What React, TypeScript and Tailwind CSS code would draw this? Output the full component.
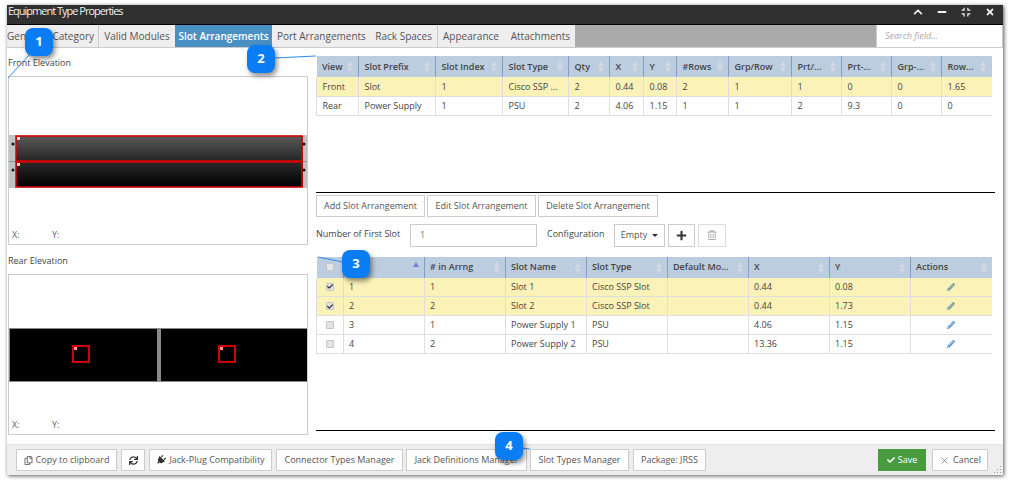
import {
  FaCheck,
  FaChevronUp,
  FaCompress,
  FaMinus,
  FaPencilAlt,
  FaPlug,
  FaPlus,
  FaRegCopy,
  FaRegTrashAlt,
  FaSync,
  FaTimes,
} from "react-icons/fa";
import { X } from "lucide-react";

const SortIcon = ({ active }: { active?: boolean }) => (
  <span className="flex flex-col items-center gap-px shrink-0">
    <span className={`w-0 h-0 border-x-[3.5px] border-x-transparent border-b-[5px] ${active ? "border-b-[#7c7fd0]" : "border-b-[#d3d9e2]"}`} />
    <span className={`w-0 h-0 border-x-[3.5px] border-x-transparent border-t-[5px] ${active ? "border-t-transparent" : "border-t-[#d3d9e2]"}`} />
  </span>
);

const Checkbox = ({ checked }: { checked?: boolean }) => (
  <span className="w-[8px] h-[8px] mx-auto flex items-center justify-center bg-[#e4e4e4] border border-[#c4c4c4] rounded-[1px]">
    {checked && <FaCheck className="text-[#333] text-[7px]" />}
  </span>
);

const Btn = ({ className, children }: { className: string; children: React.ReactNode }) => (
  <button className={`h-[22px] flex items-center justify-center gap-[3px] bg-white border border-[#ccc] text-[9px] text-[#555] whitespace-nowrap ${className}`}>
    {children}
  </button>
);

const Head = ({ label, active }: { label: string; active?: boolean }) => (
  <span className="flex items-center justify-between">
    <span>{label}</span>
    <SortIcon active={active} />
  </span>
);

const slotCols = [
  { label: "View", w: "w-[42px]" },
  { label: "Slot Prefix", w: "w-[77px]" },
  { label: "Slot Index", w: "w-[67px]" },
  { label: "Slot Type", w: "w-[66px]" },
  { label: "Qty", w: "w-[41px]" },
  { label: "X", w: "w-[34px]" },
  { label: "Y", w: "w-[33px]" },
  { label: "#Rows", w: "w-[52px]" },
  { label: "Grp/Row", w: "w-[63px]" },
  { label: "Prt/...", w: "w-[50px]" },
  { label: "Prt-...", w: "w-[50px]" },
  { label: "Grp-...", w: "w-[50px]" },
  { label: "Row...", w: "w-[50px]" },
];

const slotRows = [
  { sel: true, cells: ["Front", "Slot", "1", "Cisco SSP ...", "2", "0.44", "0.08", "2", "1", "1", "0", "0", "1.65"] },
  { sel: false, cells: ["Rear", "Power Supply", "1", "PSU", "2", "4.06", "1.15", "1", "1", "2", "9.3", "0", "0"] },
];

const moduleCols = [
  { label: "#", w: "w-[81px]", active: true },
  { label: "# in Arrng", w: "w-[81px]" },
  { label: "Slot Name", w: "w-[81px]" },
  { label: "Slot Type", w: "w-[81px]" },
  { label: "Default Mo...", w: "w-[81px]" },
  { label: "X", w: "w-[81px]" },
  { label: "Y", w: "w-[81px]" },
  { label: "Actions", w: "w-[81px]" },
];

const moduleRows = [
  { sel: true, cells: ["1", "1", "Slot 1", "Cisco SSP Slot", "", "0.44", "0.08"] },
  { sel: true, cells: ["2", "2", "Slot 2", "Cisco SSP Slot", "", "0.44", "1.73"] },
  { sel: false, cells: ["3", "1", "Power Supply 1", "PSU", "", "4.06", "1.15"] },
  { sel: false, cells: ["4", "2", "Power Supply 2", "PSU", "", "13.36", "1.15"] },
];

const thClass = "h-[21px] text-left font-semibold text-[#444] border-l border-[#7f9fc4] first:border-l-0 overflow-hidden whitespace-nowrap";
const tdClass = "h-[19px] border-l border-b border-[#dedede] overflow-hidden whitespace-nowrap";

const Callout = ({ n, className }: { n: number; className: string }) => (
  <div className={`absolute w-[28px] h-[28px] rounded-[8px] bg-[#0a7df5] text-white text-[13px] font-bold flex items-center justify-center shadow-[2px_3px_5px_rgba(0,0,0,0.45)] ${className}`}>
    {n}
  </div>
);

export default function App() {
  return (
    <div className="relative w-[1012px] h-[484px] overflow-hidden bg-white font-['Open_Sans',sans-serif] text-[9px] text-[#444]">
      <div className="ml-[7px] mt-[5px] w-[996px] h-[470px] flex flex-col bg-white shadow-[1px_1px_4px_rgba(0,0,0,0.65)]">
        {/* Title bar */}
        <div className="h-[20px] shrink-0 flex items-center justify-between bg-[#303030] border-b border-black text-white">
          <span className="text-[11px] tracking-[-1px] pl-px -mt-[7px] text-[#eee]">Equipment Type Properties</span>
          <div className="flex items-center gap-[14px] pr-[8px] -mt-[5px] text-[10px] text-[#f2f2f2]">
            <FaChevronUp />
            <FaMinus />
            <FaCompress />
            <FaTimes />
          </div>
        </div>

        {/* Tabs */}
        <div className="h-[23px] shrink-0 flex bg-[#aaa] border-b border-[#ccc] text-[10px] text-[#555]">
          <div className="w-[92px] flex items-center justify-between pr-[4px] bg-[#eee] border-r border-[#ccc] whitespace-nowrap">
            <span>General</span>
            <span>Category</span>
          </div>
          <div className="w-[76px] flex items-center justify-center bg-[#eee] whitespace-nowrap">Valid Modules</div>
          <div className="w-[97px] flex items-center justify-center bg-[#4a90c2] text-white font-semibold whitespace-nowrap">Slot Arrangements</div>
          <div className="w-[166px] flex items-center justify-between px-[5px] bg-[#eee] border-r border-[#ccc] whitespace-nowrap">
            <span>Port Arrangements</span>
            <span>Rack Spaces</span>
          </div>
          <div className="w-[137px] flex items-center justify-between px-[5px] bg-[#eee] whitespace-nowrap">
            <span>Appearance</span>
            <span>Attachments</span>
          </div>
          <div className="ml-auto w-[127px] flex items-center pl-[8px] bg-white border-x border-[#ccc] italic text-[9px] text-[#aaa]">Search field...</div>
        </div>

        {/* Body */}
        <div className="flex-1 min-h-0 flex">
          <div className="w-[300px] ml-px shrink-0 flex flex-col">
            <div className="mt-[8px] h-[14px] leading-[14px] text-[#444]">Front Elevation</div>
            <div className="mt-[6px] h-[169px] flex flex-col border border-[#ccc]">
              <svg className="mt-[58px] block" width="298" height="53" viewBox="0 0 298 53">
                <defs>
                  <linearGradient id="slotA" x1="0" y1="0" x2="0" y2="1">
                    <stop offset="0" stopColor="#5a5a5a" />
                    <stop offset="1" stopColor="#222" />
                  </linearGradient>
                  <linearGradient id="slotB" x1="0" y1="0" x2="0" y2="1">
                    <stop offset="0" stopColor="#2a2a2a" />
                    <stop offset="1" stopColor="#000" />
                  </linearGradient>
                </defs>
                <rect x="0" y="0" width="298" height="53" fill="#c2c2c2" />
                <rect x="0" y="26" width="298" height="1" fill="#8f8f8f" />
                <rect x="7" y="1" width="287" height="26" fill="url(#slotA)" />
                <rect x="7" y="27" width="287" height="25" fill="url(#slotB)" />
                <rect x="7" y="1" width="286" height="25" fill="none" stroke="#e00000" strokeWidth="1.5" />
                <rect x="7" y="27" width="286" height="25" fill="none" stroke="#e00000" strokeWidth="1.5" />
                <circle cx="4" cy="9" r="1.5" fill="#111" />
                <circle cx="4" cy="35" r="1.5" fill="#111" />
                <circle cx="295" cy="9" r="1.5" fill="#111" />
                <circle cx="295" cy="35" r="1.5" fill="#111" />
                <rect x="8" y="2" width="3" height="3" fill="#ffd0d0" />
                <rect x="8" y="28" width="3" height="3" fill="#ffd0d0" />
              </svg>
              <div className="mt-auto mb-[2px] h-[14px] pl-[3px] flex text-[#666]">
                <span className="w-[40px]">X:</span>
                <span>Y:</span>
              </div>
            </div>
            <div className="mt-[9px] h-[14px] leading-[14px] text-[#444]">Rear Elevation</div>
            <div className="mt-[6px] h-[161px] flex flex-col border border-[#ccc]">
              <svg className="mt-[53px] block" width="298" height="54" viewBox="0 0 298 54">
                <rect x="0" y="0" width="298" height="54" fill="#8a8a8a" />
                <rect x="1" y="1" width="147" height="52" fill="#000" />
                <rect x="152" y="1" width="146" height="52" fill="#000" />
                <rect x="64" y="18" width="16" height="16" fill="none" stroke="#d00000" strokeWidth="2" />
                <rect x="210" y="18" width="16" height="16" fill="none" stroke="#d00000" strokeWidth="2" />
                <rect x="65" y="19" width="3" height="3" fill="#ff9aa0" />
                <rect x="211" y="19" width="3" height="3" fill="#ff9aa0" />
              </svg>
              <div className="mt-auto mb-[2px] h-[14px] pl-[3px] flex text-[#666]">
                <span className="w-[40px]">X:</span>
                <span>Y:</span>
              </div>
            </div>
          </div>

          <div className="w-[679px] ml-[8px] shrink-0 flex flex-col">
            <table className="mt-[8px] w-[675px] table-fixed border-collapse">
              <thead>
                <tr className="bg-[#bccddf]">
                  {slotCols.map((c) => (
                    <th key={c.label} className={`${thClass} px-[5.5px] ${c.w}`}>
                      <Head label={c.label} />
                    </th>
                  ))}
                </tr>
              </thead>
              <tbody>
                {slotRows.map((r) => (
                  <tr key={r.cells[0]} className={r.sel ? "bg-[#fbf2b7]" : "bg-white"}>
                    {r.cells.map((v, i) => (
                      <td key={i} className={`${tdClass} px-[5.5px]`}>{v}</td>
                    ))}
                  </tr>
                ))}
              </tbody>
            </table>

            <div className="mt-[76px] h-px bg-black shrink-0" />
            <div className="mt-[2px] flex gap-[2px]">
              <Btn className="w-[109px]">Add Slot Arrangement</Btn>
              <Btn className="w-[109px]">Edit Slot Arrangement</Btn>
              <Btn className="w-[120px]">Delete Slot Arrangement</Btn>
            </div>
            <div className="mt-[7px] h-[23px] flex items-center">
              <span className="w-[94px] -mt-[3px] whitespace-nowrap">Number of First Slot</span>
              <div className="w-[127px] h-[23px] flex items-center pl-[9px] border border-[#ccc] text-[#777]">1</div>
              <span className="ml-[10px] w-[67px] -mt-[3px] whitespace-nowrap">Configuration</span>
              <div className="w-[51px] h-[23px] flex items-center justify-center gap-[5px] border border-[#ccc] text-[#555]">
                Empty
                <span className="w-0 h-0 border-x-[3px] border-x-transparent border-t-[3px] border-t-[#333]" />
              </div>
              <div className="ml-[3px] w-[27px] h-[23px] flex items-center justify-center border border-[#ccc] text-[#333] text-[11px]">
                <FaPlus />
              </div>
              <div className="ml-[3px] w-[28px] h-[23px] flex items-center justify-center border border-[#ddd] text-[#aaa] text-[10px]">
                <FaRegTrashAlt />
              </div>
            </div>

            <table className="mt-[10px] w-[675px] table-fixed border-collapse">
              <thead>
                <tr className="bg-[#bccddf]">
                  <th className={`${thClass} px-[5px] w-[27px]`}>
                    <Checkbox />
                  </th>
                  {moduleCols.map((c) => (
                    <th key={c.label} className={`${thClass} px-[5px] ${c.w}`}>
                      <Head label={c.label} active={c.active} />
                    </th>
                  ))}
                </tr>
              </thead>
              <tbody>
                {moduleRows.map((r) => (
                  <tr key={r.cells[0]} className={r.sel ? "bg-[#fbf2b7]" : "bg-white"}>
                    <td className={`${tdClass} px-[5px]`}>
                      <Checkbox checked={r.sel} />
                    </td>
                    {r.cells.map((v, i) => (
                      <td key={i} className={`${tdClass} px-[5px]`}>{v}</td>
                    ))}
                    <td className={`${tdClass} px-[5px]`}>
                      <FaPencilAlt className={`mx-auto text-[8px] ${r.sel ? "text-[#6f9aa0]" : "text-[#5b9bd0]"}`} />
                    </td>
                  </tr>
                ))}
              </tbody>
            </table>

            <div className="mt-auto mb-[13px] h-px bg-black shrink-0" />
          </div>
        </div>

        {/* Footer */}
        <div className="relative h-[31px] shrink-0 flex items-center justify-between pl-[9px] pr-[15px] bg-[#eee] border-t border-[#e2e2e2]">
          <div className="flex gap-[3px]">
            <Btn className="w-[101px]"><FaRegCopy className="text-[9px]" />Copy to clipboard</Btn>
            <Btn className="w-[24px] ml-px"><FaSync className="text-[9px] text-[#333]" /></Btn>
            <Btn className="w-[123px] ml-px"><FaPlug className="text-[10px] text-[#333] rotate-45" />Jack-Plug Compatibility</Btn>
            <Btn className="w-[127px] ml-px">Connector Types Manager</Btn>
            <Btn className="w-[121px]">Jack Definitions Manager</Btn>
            <Btn className="w-[99px]">Slot Types Manager</Btn>
            <Btn className="w-[73px] ml-px">Package: JRSS</Btn>
          </div>
          <div className="flex gap-[6px]">
            <Btn className="w-[48px] !bg-[#4a9b3f] !border-[#4a9b3f] !text-white"><FaCheck className="text-[8px]" />Save</Btn>
            <Btn className="w-[56px]"><X size={11} strokeWidth={1.25} />Cancel</Btn>
          </div>
          <svg className="absolute right-[1px] bottom-[1px]" width="9" height="9" viewBox="0 0 9 9">
            <path d="M7.5 1v1M7.5 4v1M7.5 7v1M4.5 7v1M1.5 7v1M4.5 4v1" stroke="#999" fill="none" />
          </svg>
        </div>
      </div>

      {/* Callout leader lines */}
      <svg className="absolute inset-0 pointer-events-none" width="1012" height="484" viewBox="0 0 1012 484">
        <path d="M30 54 L8 78" stroke="#2b8df0" fill="none" />
        <path d="M274 58 L316 56" stroke="#2b8df0" fill="none" />
        <path d="M343 262 L318 257" stroke="#2b8df0" fill="none" />
        <path d="M522 448 L530 449" stroke="#2b8df0" fill="none" />
      </svg>
      <Callout n={1} className="left-[25px] top-[28px]" />
      <Callout n={2} className="left-[247px] top-[45px]" />
      <Callout n={3} className="left-[342px] top-[250px]" />
      <Callout n={4} className="left-[495px] top-[432px]" />
    </div>
  );
}
